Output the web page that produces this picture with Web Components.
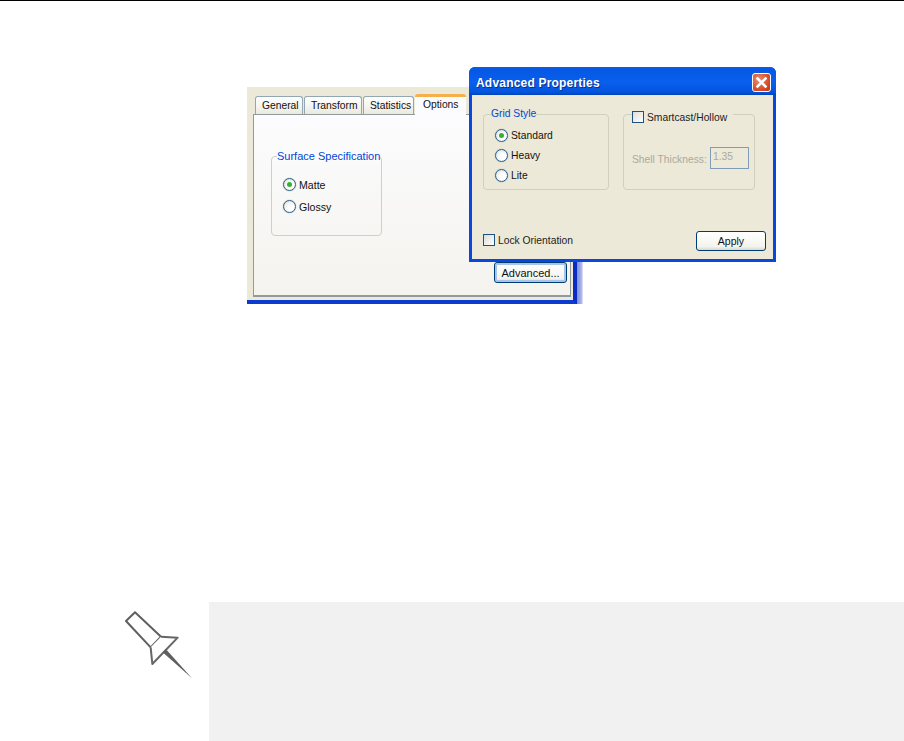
<!DOCTYPE html>
<html>
<head>
<meta charset="utf-8">
<style>
    html, body { margin: 0; padding: 0; background: #fff; }
    body { height: 741px; overflow: hidden; font-family: "Liberation Sans", Arial, sans-serif; }
</style>
</head>
<body>
<doc-page>
    <xp-figure></xp-figure>
    <note-box></note-box>
</doc-page>

<script>
const pageTpl = document.createElement('template');
pageTpl.innerHTML = `
    <style>
        :host {
            display: flex;
            flex-direction: column;
            height: 741px;
            box-sizing: border-box;
            border-top: 1px solid #000;
            padding-top: 86px;
        }
        ::slotted(xp-figure) { margin-left: 247px; }
        ::slotted(note-box) { margin-top: 298px; margin-left: 111px; }
    </style>
    <slot></slot>
`;

class DocPage extends HTMLElement {
    constructor() {
        super();
        this.attachShadow({ mode: 'open' }).appendChild(pageTpl.content.cloneNode(true));
    }
}

const radioTpl = document.createElement('template');
radioTpl.innerHTML = `
    <style>
        :host {
            display: flex;
            align-items: center;
            gap: 3px;
            height: 13px;
            font: var(--fs, 10.3px) "Liberation Sans", Arial, sans-serif;
            color: #111;
        }
        .dot {
            width: 11px;
            height: 11px;
            flex: none;
            border: 1px solid #2f5f8a;
            border-radius: 50%;
            background: radial-gradient(circle at 60% 60%, #fff 30%, #d8d8cc 100%);
            box-shadow: 0 0 1px #5f86a8;
            display: flex;
            align-items: center;
            justify-content: center;
        }
        i {
            display: none;
            width: 5px;
            height: 5px;
            border-radius: 50%;
            background: #35b035;
        }
        :host([checked]) i { display: block; }
    </style>
    <span class="dot"><i></i></span><slot></slot>
`;

class XpRadio extends HTMLElement {
    constructor() {
        super();
        this.attachShadow({ mode: 'open' }).appendChild(radioTpl.content.cloneNode(true));
    }
}

const checkTpl = document.createElement('template');
checkTpl.innerHTML = `
    <style>
        :host {
            display: inline-flex;
            align-items: center;
            gap: 3px;
            font: 10.3px "Liberation Sans", Arial, sans-serif;
            color: #222;
        }
        .box {
            width: 10px;
            height: 10px;
            flex: none;
            border: 1px solid #1c5180;
            background: linear-gradient(135deg, #dcdcd7, #fff);
        }
    </style>
    <span class="box"></span><slot></slot>
`;

class XpCheck extends HTMLElement {
    constructor() {
        super();
        this.attachShadow({ mode: 'open' }).appendChild(checkTpl.content.cloneNode(true));
    }
}

const btnTpl = document.createElement('template');
btnTpl.innerHTML = `
    <style>
        :host {
            display: flex;
            align-items: center;
            justify-content: center;
            box-sizing: border-box;
            border: 1px solid #003c74;
            border-radius: 3px;
            background: linear-gradient(#fff, #f4f4ee 80%, #dcd8c8);
            font: var(--fs, 11px) "Liberation Sans", Arial, sans-serif;
            color: #111;
        }
        :host([focused]) { box-shadow: inset 0 0 0 2px #a9c4ea; }
    </style>
    <slot></slot>
`;

class XpButton extends HTMLElement {
    constructor() {
        super();
        this.attachShadow({ mode: 'open' }).appendChild(btnTpl.content.cloneNode(true));
    }
}

const groupTpl = document.createElement('template');
groupTpl.innerHTML = `
    <style>
        :host {
            display: block;
            position: relative;
            box-sizing: border-box;
            border: 1px solid #d0d0bf;
            border-radius: 4px;
        }
        .legend {
            position: absolute;
            top: var(--legend-top, -8px);
            left: var(--legend-left, 5px);
            height: 14px;
            font: var(--legend-fs, 11px)/14px "Liberation Sans", Arial, sans-serif;
            color: #0046d5;
            background: var(--legend-bg, #ece9d8);
            white-space: nowrap;
        }
    </style>
    <div class="legend"><slot name="legend"></slot></div>
    <slot></slot>
`;

class XpGroup extends HTMLElement {
    constructor() {
        super();
        this.attachShadow({ mode: 'open' }).appendChild(groupTpl.content.cloneNode(true));
    }
}

const dialogTpl = document.createElement('template');
dialogTpl.innerHTML = `
    <style>
        :host {
            display: flex;
            flex-direction: column;
            width: 307px;
            height: 195px;
            box-sizing: border-box;
            background: #0a47dd;
            border-radius: 6px 6px 0 0;
            padding: 0 3px 3px;
            --legend-fs: 10.3px;
            --legend-left: 7px;
            --fs: 10.3px;
        }
        .title {
            flex: none;
            box-sizing: border-box;
            height: 28px;
            display: flex;
            align-items: center;
            justify-content: space-between;
            padding: 4px 5px 0 7px;
            margin: 0 -3px;
            border-radius: 6px 6px 0 0;
            background: linear-gradient(#0a5be8, #0458e4 12%, #0a5fee 55%, #0353dc 90%, #0244b8);
            color: #fff;
            font: bold 12px "Liberation Sans", Arial, sans-serif;
            letter-spacing: 0.2px;
            text-shadow: 1px 1px 0 #0a2f8c;
        }
        .close {
            align-self: flex-start;
            margin-top: 2px;
            width: 19px;
            height: 19px;
            box-sizing: border-box;
            border: 1px solid #fff;
            border-radius: 3px;
            background: radial-gradient(circle at 35% 35%, #ec8f70, #d9502a 60%, #bb3510);
        }
        .close svg { display: block; }
        .body {
            flex: 1;
            background: #ece9d8;
            display: grid;
            grid-template-columns: 126px 132px;
            grid-template-rows: 76px 1fr;
            column-gap: 14px;
            padding: 19px 0 0 11px;
        }
        .radios {
            display: flex;
            flex-direction: column;
            gap: 7px;
            padding: 14px 0 0 11px;
        }
        .smart {
            --legend-top: -4px;
            --legend-left: 8px;
        }
        .smart xp-check { padding-right: 6px; }
        .shell {
            display: flex;
            justify-content: space-between;
            align-items: flex-start;
            padding: 32px 5px 0 8px;
            font: 10.3px/13px "Liberation Sans", Arial, sans-serif;
            color: #aca899;
        }
        .shell span { margin-top: 6px; }
        .shell b {
            font-weight: normal;
            box-sizing: border-box;
            width: 39px;
            height: 22px;
            border: 1px solid #7f9db9;
            padding: 2px 0 0 2px;
        }
        .foot {
            grid-column: 1 / 3;
            display: flex;
            justify-content: space-between;
            align-items: flex-start;
            padding-top: 41px;
            width: 283px;
        }
        .foot xp-check { margin-top: 3px; }
        .foot xp-button { width: 70px; height: 20px; --fs: 10.5px; }
    </style>
    <div class="title">
        <span>Advanced Properties</span>
        <span class="close">
            <svg width="17" height="17" viewBox="0 0 17 17"><path d="M4.5 4.5L12.5 12.5M12.5 4.5L4.5 12.5" stroke="#fff" stroke-width="2.6" stroke-linecap="square" fill="none"/></svg>
        </span>
    </div>
    <div class="body">
        <xp-group>
            <span slot="legend">Grid Style</span>
            <div class="radios">
                <xp-radio checked>Standard</xp-radio>
                <xp-radio>Heavy</xp-radio>
                <xp-radio>Lite</xp-radio>
            </div>
        </xp-group>
        <xp-group class="smart">
            <xp-check slot="legend">Smartcast/Hollow</xp-check>
            <div class="shell"><span>Shell Thickness:</span><b>1.35</b></div>
        </xp-group>
        <div class="foot">
            <xp-check>Lock Orientation</xp-check>
            <xp-button>Apply</xp-button>
        </div>
    </div>
`;

class XpDialog extends HTMLElement {
    constructor() {
        super();
        this.attachShadow({ mode: 'open' }).appendChild(dialogTpl.content.cloneNode(true));
    }
}

const figureTpl = document.createElement('template');
figureTpl.innerHTML = `
    <style>
        :host {
            display: flex;
            position: relative;
            width: 336px;
            height: 217px;
            font: 10.3px "Liberation Sans", Arial, sans-serif;
        }
        .win {
            width: 330px;
            flex: none;
            box-sizing: border-box;
            background: #ece9d8;
            border-bottom: 4px solid #0a3cd2;
            border-right: 4px solid #0a2cc4;
            padding: 7px 0 3px 6px;
            display: flex;
            flex-direction: column;
        }
        .edge {
            flex: 1;
            background: linear-gradient(90deg, #7f8fdc, #a8b2e6 70%, #e6e8f6);
        }
        .tabs {
            flex: none;
            display: flex;
            align-items: flex-end;
            gap: 1px;
            height: 20px;
            padding-left: 2px;
            position: relative;
            z-index: 1;
        }
        .tab {
            box-sizing: border-box;
            height: 18px;
            display: flex;
            align-items: center;
            padding-left: 6px;
            border: 1px solid #91a7b4;
            border-bottom: 0;
            border-radius: 3px 3px 0 0;
            background: linear-gradient(#fff, #f3f3ef 60%, #ebe9dd);
            color: #111;
        }
        .tab.on {
            height: 21px;
            margin-bottom: -1px;
            padding-left: 8px;
            border: 0;
            border-top: 3px solid #f5b04a;
            background: #fcfcfe;
            padding-bottom: 3px;
        }
        .panel {
            flex: 1;
            width: 318px;
            box-sizing: border-box;
            border: 1px solid #919b9c;
            border-bottom-width: 2px;
            background: linear-gradient(#fcfcfe, #f4f3ee);
            padding: 41px 0 0 17px;
            position: relative;
        }
        xp-group {
            width: 111px;
            height: 80px;
            --legend-bg: #fbfbfb;
        }
        .radios {
            display: flex;
            flex-direction: column;
            gap: 9px;
            padding: 21px 0 0 11px;
            --fs: 10.6px;
        }
        .adv {
            position: absolute;
            right: 3px;
            bottom: 12px;
            width: 73px;
            height: 21px;
        }
        xp-dialog {
            position: absolute;
            left: 222px;
            top: -20px;
        }
    </style>
    <div class="win">
        <div class="tabs">
            <div class="tab" style="width:48px">General</div>
            <div class="tab" style="width:58px">Transform</div>
            <div class="tab" style="width:51px">Statistics</div>
            <div class="tab on" style="width:51px">Options</div>
        </div>
        <div class="panel">
            <xp-group>
                <span slot="legend">Surface Specification</span>
                <div class="radios">
                    <xp-radio checked>Matte</xp-radio>
                    <xp-radio>Glossy</xp-radio>
                </div>
            </xp-group>
            <xp-button class="adv" focused>Advanced...</xp-button>
        </div>
    </div>
    <div class="edge"></div>
    <xp-dialog></xp-dialog>
`;

class XpFigure extends HTMLElement {
    constructor() {
        super();
        this.attachShadow({ mode: 'open' }).appendChild(figureTpl.content.cloneNode(true));
    }
}

const noteTpl = document.createElement('template');
noteTpl.innerHTML = `
    <style>
        :host {
            display: flex;
            height: 139px;
        }
        svg { flex: none; width: 98px; height: 100px; margin-top: -7px; }
        .box { flex: 1; background: #f1f1f1; }
    </style>
    <svg viewBox="0 0 294 300">
        <g transform="translate(-3 0)">
            <path d="M48 78L75 52L153 125L122 157Z" fill="#fff" stroke="#5f5f5f" stroke-width="6" stroke-linejoin="round"/>
            <path d="M153 125L203 128L127 207L122 157" fill="#fff" stroke="#666" stroke-width="6" stroke-linejoin="round"/>
            <path d="M168 163L246 250L158 172Z" fill="#5f5f5f"/>
        </g>
    </svg>
    <div class="box"></div>
`;

class NoteBox extends HTMLElement {
    constructor() {
        super();
        this.attachShadow({ mode: 'open' }).appendChild(noteTpl.content.cloneNode(true));
    }
}

customElements.define('xp-radio', XpRadio);
customElements.define('xp-check', XpCheck);
customElements.define('xp-button', XpButton);
customElements.define('xp-group', XpGroup);
customElements.define('xp-dialog', XpDialog);
customElements.define('xp-figure', XpFigure);
customElements.define('note-box', NoteBox);
customElements.define('doc-page', DocPage);
</script>
</body>
</html>
